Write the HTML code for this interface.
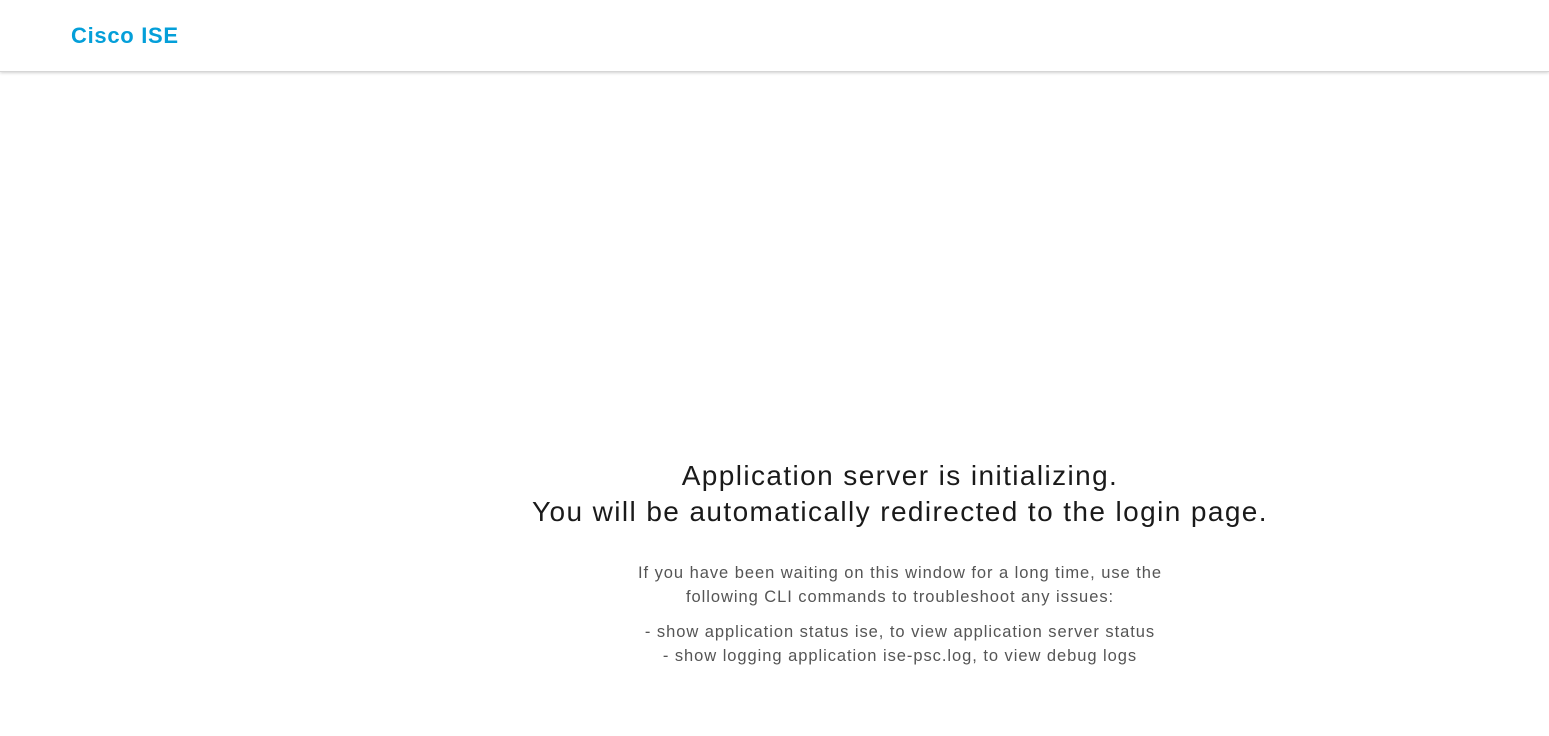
<!DOCTYPE html>
<html><head><meta charset="utf-8"><style>
html,body{margin:0;padding:0;background:#fff;width:1549px;height:736px;overflow:hidden;font-family:"Liberation Sans",Arial,sans-serif;}
.hdr{position:absolute;left:0;top:0;width:1549px;height:71px;background:#fff;border-bottom:1px solid #d6d6d6;box-shadow:0 1px 3px rgba(0,0,0,0.18);}
.logo{position:absolute;left:71px;top:23px;font-size:22px;color:#049fd9;font-weight:bold;letter-spacing:0.7px;}
.main{position:absolute;left:400px;width:1000px;top:458px;text-align:center;}
.t{font-size:28px;color:#1a1a1a;line-height:36px;letter-spacing:1.4px;}
.s{font-size:16.5px;color:#555;line-height:24px;letter-spacing:0.95px;}
</style></head><body>
<div class="hdr"><div class="logo">Cisco ISE</div></div>
<div class="main">
<div class="t">Application server is initializing.<br>You will be automatically redirected to the login page.</div>
<div class="s" style="margin-top:31px">If you have been waiting on this window for a long time, use the<br>following CLI commands to troubleshoot any issues:</div>
<div class="s" style="margin-top:11px">- show application status ise, to view application server status<br>- show logging application ise-psc.log, to view debug logs</div>
</div>
</body></html>
